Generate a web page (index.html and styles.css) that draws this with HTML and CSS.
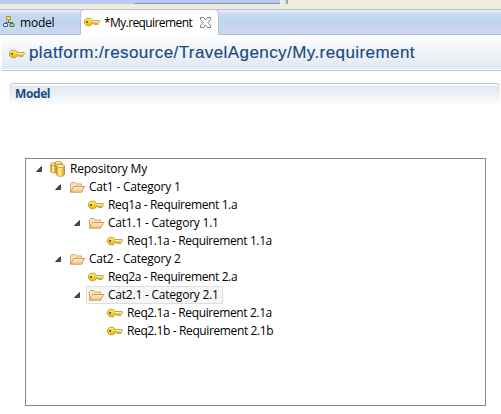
FILE: index.html
```
<!DOCTYPE html>
<html lang="en">
<head>
<meta charset="utf-8">
<title>My.requirement</title>
<link rel="stylesheet" href="styles.css">
</head>
<body>
<svg class="defs" aria-hidden="true">
  <defs>
    <linearGradient id="gold" x1="0" y1="0" x2="0" y2="1"><stop offset="0" stop-color="#fff35c"/><stop offset="1" stop-color="#e3b420"/></linearGradient>
    <linearGradient id="drum" x1="0" y1="0" x2="1" y2="0"><stop offset="0" stop-color="#e0a020"/><stop offset=".4" stop-color="#fff6b0"/><stop offset="1" stop-color="#dc9410"/></linearGradient>
    <linearGradient id="paper" x1="0" y1="0" x2="0" y2="1"><stop offset="0" stop-color="#fff0cc"/><stop offset="1" stop-color="#efc27c"/></linearGradient>
    <symbol id="key" viewBox="0 0 16 16">
      <path d="M7 6.500h8l.5 1-1 1.500H14v1.500h-1.500V9.200h-1v1.300H10V9.200H7z" fill="#f7dc58" stroke="#a8842c" stroke-width=".7"/>
      <path d="M2.500 4.300h4L8.300 6.300v3.400L6.500 11.700h-3.700L.6 9.600V6.300z" fill="url(#gold)" stroke="#c39a26" stroke-width=".9"/>
      <path d="M8 7.500h6.500" stroke="#fff3a8" stroke-width=".9"/>
      <path d="M2.200 7h1.800v1.800H2.200z" fill="#6d4a10"/>
    </symbol>
    <symbol id="folder" viewBox="0 0 16 16">
      <path d="M1.500 13V4.500l1-1h3.500l1 1.500h5.500v3" fill="#f9e3b6" stroke="#d5a970"/>
      <path d="M1.500 13.200L4.500 7.500h11l-3 5.700z" fill="url(#paper)" stroke="#cf9c5c"/>
    </symbol>
    <symbol id="repo" viewBox="0 0 16 16">
      <g fill="url(#drum)" stroke="#c08518" stroke-width=".8">
        <path d="M.8 3.500v7c0 .8 1.200 1.400 3 1.400s3-.6 3-1.400v-7z"/><ellipse cx="3.800" cy="3.200" rx="3" ry="1.400" fill="#fff0b0"/>
        <path d="M5 2v9h7V2z"/><ellipse cx="8.500" cy="1.900" rx="3.500" ry="1.400" fill="#fff0b0"/>
        <path d="M6.500 5.200v8.300c0 1 1.600 1.800 4 1.800s4-.8 4-1.800V5.200z"/><ellipse cx="10.500" cy="5" rx="4" ry="1.600" fill="#fff4b8"/>
      </g>
    </symbol>
    <symbol id="caret" viewBox="0 0 6 6"><path d="M5.500.6v4.900H.6z" fill="#505050" stroke="#222" stroke-width=".8"/></symbol>
    <symbol id="model" viewBox="0 0 12 12">
      <path d="M5.500 4v2.500M2.500 8V6.500h7V8" fill="none" stroke="#52648a"/>
      <rect x="3.500" y=".5" width="4" height="3.500" rx=".5" fill="#ffe37a" stroke="#b8801c"/>
      <rect x=".5" y="7.500" width="4" height="3" rx=".5" fill="#e8efff" stroke="#3d5f9e"/>
      <rect x="7" y="7.500" width="4" height="3" rx=".5" fill="#a8e070" stroke="#2d7c32"/>
    </symbol>
  </defs>
</svg>
<div class="toolbar"><span class="strip"></span><span class="strip-edge"></span><span class="nub"></span></div>
<nav class="tabs">
  <div class="tab"><svg class="model-icon"><use href="#model"/></svg><span class="model-label">model</span></div>
  <div class="tab active"><svg class="icon"><use href="#key"/></svg><span class="active-label">*My.requirement</span>
    <svg class="close" viewBox="0 0 11 11"><path d="M.5.5h3l2 2.500 2-2.500h3v2L8 5.500l2.500 3v2h-3l-2-2.500-2 2.500h-3v-2l2.500-3-2.500-3z" fill="#fff" stroke="#6f6f6f" stroke-width=".9"/></svg>
  </div>
</nav>
<header class="title"><svg class="icon"><use href="#key"/></svg><h1>platform:/resource/TravelAgency/My.requirement</h1></header>
<section class="section"><h2>Model</h2></section>
<main class="tree">
  <div class="row d0"><svg class="caret"><use href="#caret"/></svg><div class="item"><svg class="icon"><use href="#repo"/></svg><span>Repository My</span></div></div>
  <div class="row d1"><svg class="caret"><use href="#caret"/></svg><div class="item"><svg class="icon"><use href="#folder"/></svg><span>Cat1 - Category 1</span></div></div>
  <div class="row d2"><i class="caret"></i><div class="item req"><svg class="icon"><use href="#key"/></svg><span>Req1a - Requirement 1.a</span></div></div>
  <div class="row d2"><svg class="caret"><use href="#caret"/></svg><div class="item"><svg class="icon"><use href="#folder"/></svg><span>Cat1.1 - Category 1.1</span></div></div>
  <div class="row d3"><i class="caret"></i><div class="item req"><svg class="icon"><use href="#key"/></svg><span>Req1.1a - Requirement 1.1a</span></div></div>
  <div class="row d1"><svg class="caret"><use href="#caret"/></svg><div class="item"><svg class="icon"><use href="#folder"/></svg><span>Cat2 - Category 2</span></div></div>
  <div class="row d2"><i class="caret"></i><div class="item req"><svg class="icon"><use href="#key"/></svg><span>Req2a - Requirement 2.a</span></div></div>
  <div class="row d2"><svg class="caret"><use href="#caret"/></svg><div class="item selected"><svg class="icon"><use href="#folder"/></svg><span>Cat2.1 - Category 2.1</span></div></div>
  <div class="row d3"><i class="caret"></i><div class="item req"><svg class="icon"><use href="#key"/></svg><span>Req2.1a - Requirement 2.1a</span></div></div>
  <div class="row d3"><i class="caret"></i><div class="item req"><svg class="icon"><use href="#key"/></svg><span>Req2.1b - Requirement 2.1b</span></div></div>
</main>
</body>
</html>
```
FILE: styles.css
```
* { box-sizing: border-box; }
body { margin: 0; height: 414px; overflow: hidden; background: #fff; color: #000; font: 12px "Open Sans", "Noto Sans", sans-serif; }
svg { display: block; flex: none; }
.defs { position: absolute; width: 0; height: 0; }
.icon { width: 16px; height: 16px; }
.toolbar { display: flex; height: 9px; background: #f0ebdf; }
.strip { width: 134px; height: 4px; background: #b9cbef; }
.strip-edge { width: 146px; height: 4px; background: #b9cbef; border-bottom: 1px solid #8094be; }
.nub { width: 3px; height: 4px; margin-left: 5px; background: #b9cbef; border-right: 1px solid #8094be; }
.tabs { display: flex; height: 26px; border-top: 1px solid #b5bfd5; border-bottom: 1px solid #b5bfd5; background: linear-gradient(#e9f0fb 0, #c5d9f1 5px, #bdd5ef 15px, #c9d7f2 16px, #c9d7f2); }
.tab { display: flex; align-items: center; width: 80px; white-space: nowrap; }
.model-icon { width: 12px; height: 12px; margin-left: 3px; }
.model-label { margin-left: 5px; letter-spacing: -.2px; }
.active { width: 139px; height: 26px; margin-top: -1px; padding: 0 0 1px 3px; background: #fff; border: 1px solid #b5bfd5; border-bottom: 0; border-radius: 5px 5px 0 0; }
.active-label { flex: none; width: 89px; margin: 0 7px 0 4px; letter-spacing: -.6px; }
.close { width: 11px; height: 11px; }
.title { display: flex; align-items: center; height: 36px; margin-left: 2px; padding: 2px 0 0 7px; border-bottom: 1px solid #b4c7e2; background: linear-gradient(#fff, #e1e8f2 34px, #fff 34px); }
h1 { margin: 0 0 2px 4px; color: #174b83; font: 17px/22px "Liberation Sans", sans-serif; letter-spacing: .42px; white-space: nowrap; -webkit-text-stroke: .15px #174b83; }
.section { height: 24px; margin: 12px 1px 0 9px; padding-left: 6px; border-top: 1px solid #b4c7e2; border-radius: 4px 4px 0 0; background: linear-gradient(#fff 1px, #e1e8f1 2px, #fff 23px); }
h2 { margin: 0; color: #174b83; font: bold 12px/20px "Open Sans", sans-serif; letter-spacing: -.4px; }
.tree { width: 461px; height: 248px; margin: 51px 0 0 25px; padding: 1px 0 0 10px; border: 1px solid #828790; }
.row { display: flex; align-items: center; height: 18px; }
.d1 { padding-left: 19px; }
.d2 { padding-left: 38px; }
.d3 { padding-left: 57px; }
.caret { width: 6px; height: 6px; margin-right: 6px; }
.item { display: flex; align-items: center; height: 18px; padding: 0 3px 0 1px; gap: 4px; border: 1px solid transparent; line-height: 16px; letter-spacing: -.22px; white-space: nowrap; }
.req { letter-spacing: -.38px; }
.selected { background: #f7f7f7; border-color: #dedede; }
```
